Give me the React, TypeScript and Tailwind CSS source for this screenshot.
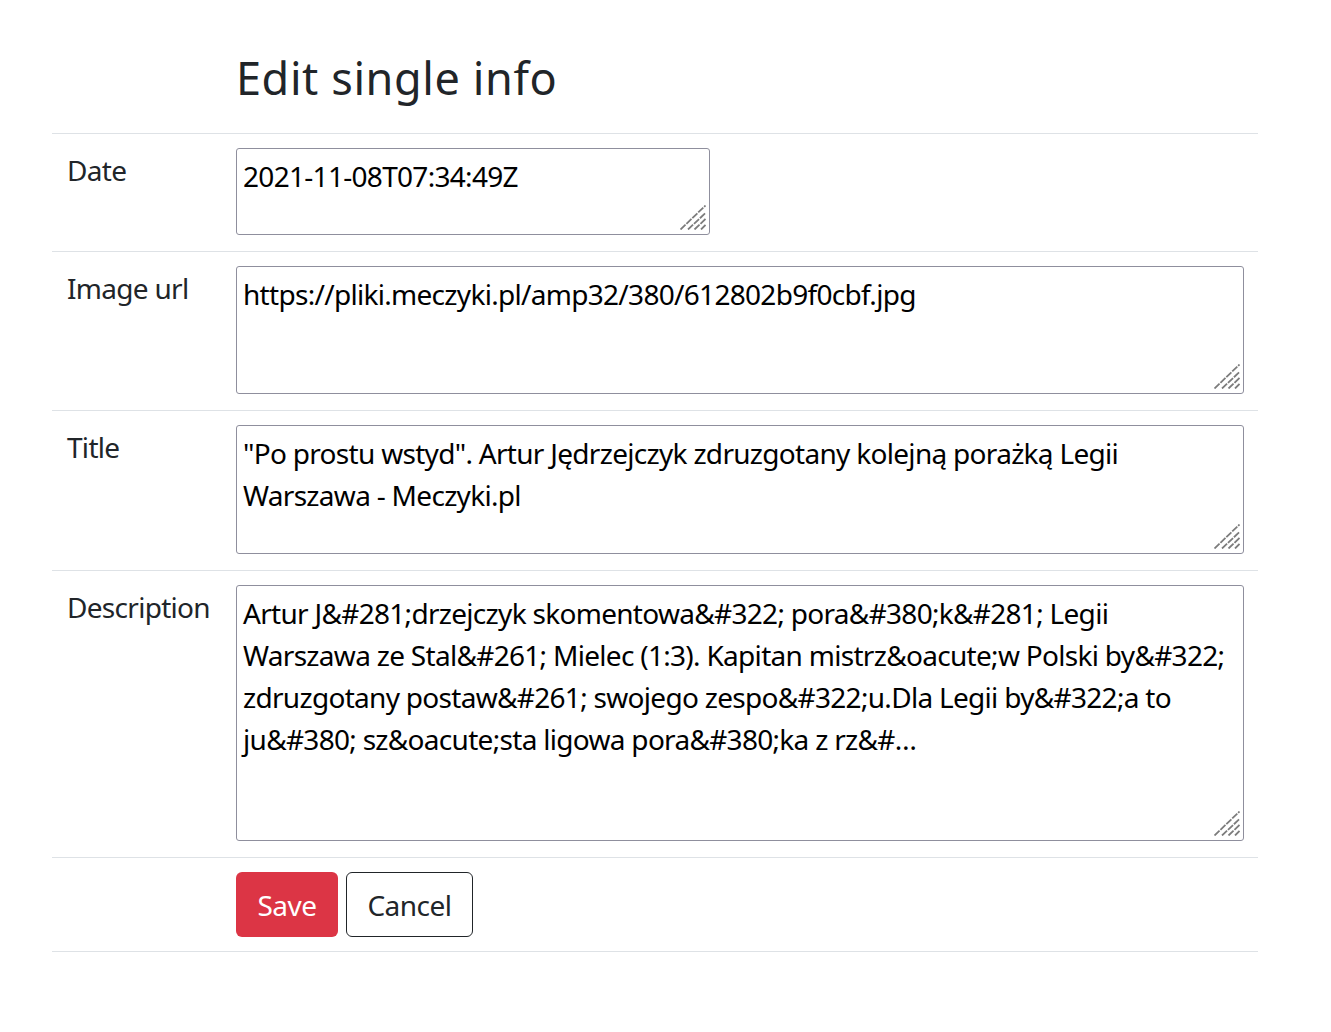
import React from "react";

const FONT = "font-['Noto_Sans',sans-serif]";

function Grip() {
  return (
    <svg
      className="pointer-events-none absolute bottom-[5px] right-[4px]"
      width="26"
      height="25"
      viewBox="0 0 26 25"
    >
      <g stroke="#7c7c7c" strokeWidth="1.8" strokeDasharray="7 1.2" strokeLinecap="butt">
        <line x1="0.5" y1="24.5" x2="25.5" y2="0.5" />
        <line x1="8" y1="24.5" x2="25.5" y2="8" />
        <line x1="14.5" y1="24.5" x2="25.5" y2="14" />
        <line x1="21" y1="24.5" x2="25.5" y2="20" />
      </g>
    </svg>
  );
}

function Area({
  value,
  w,
  h,
}: {
  value: string;
  w: string;
  h: string;
}) {
  return (
    <div className={`relative ${w} ${h}`}>
      <textarea
        defaultValue={value}
        className={`block h-full w-full resize-none rounded-[3px] border border-[#8f8f9d] bg-white pl-[6px] pr-[4px] pt-[6px] text-[28px] leading-[42px] tracking-[-0.7px] text-black outline-none ${FONT}`}
      />
      <Grip />
    </div>
  );
}

function Row({
  label,
  children,
  last,
}: {
  label: string;
  children: React.ReactNode;
  last?: boolean;
}) {
  return (
    <div
      className={`flex border-t border-[#dee2e6] pt-[14px] ${
        last ? "border-b pb-[14px]" : "pb-[16px]"
      }`}
    >
      <div className="w-[184px] shrink-0 pl-[15px] pt-[1px] text-[28px] leading-[42px] tracking-[-0.7px] text-[#212529]">
        {label}
      </div>
      <div className="min-w-0 flex-1 pr-[14px]">{children}</div>
    </div>
  );
}

const DESCRIPTION =
  "Artur J&#281;drzejczyk skomentowa&#322; pora&#380;k&#281; Legii Warszawa ze Stal&#261; Mielec (1:3). Kapitan mistrz&oacute;w Polski by&#322; zdruzgotany postaw&#261; swojego zespo&#322;u.Dla Legii by&#322;a to ju&#380; sz&oacute;sta ligowa pora&#380;ka z rz&#\u2026";

const TITLE =
  "\"Po prostu wstyd\". Artur J\u0119drzejczyk zdruzgotany kolejn\u0105 pora\u017ck\u0105 Legii Warszawa - Meczyki.pl";

export default function App() {
  return (
    <div className={`min-h-[1032px] bg-white ${FONT}`}>
      <div className="ml-[52px] w-[1206px]">
        <div className="h-[133px] pl-[184px] pt-[51px]">
          <h1 className="text-[45px] leading-[54px] font-normal tracking-[0.6px] text-[#212529]">
            Edit single info
          </h1>
        </div>
        <Row label="Date">
          <Area value="2021-11-08T07:34:49Z" w="w-[474px]" h="h-[87px]" />
        </Row>
        <Row label="Image url">
          <Area
            value="https://pliki.meczyki.pl/amp32/380/612802b9f0cbf.jpg"
            w="w-[1008px]"
            h="h-[128px]"
          />
        </Row>
        <Row label="Title">
          <Area value={TITLE} w="w-[1008px]" h="h-[129px]" />
        </Row>
        <Row label="Description">
          <Area value={DESCRIPTION} w="w-[1008px]" h="h-[256px]" />
        </Row>
        <Row label="" last>
          <div className="flex gap-[8px]">
            <button className="h-[65px] w-[102px] rounded-[6px] bg-[#dc3545] text-[28px] tracking-[-0.5px] text-white">
              Save
            </button>
            <button className="h-[65px] w-[127px] rounded-[6px] border border-[#212529] bg-white text-[28px] tracking-[-0.5px] text-[#212529]">
              Cancel
            </button>
          </div>
        </Row>
      </div>
    </div>
  );
}
